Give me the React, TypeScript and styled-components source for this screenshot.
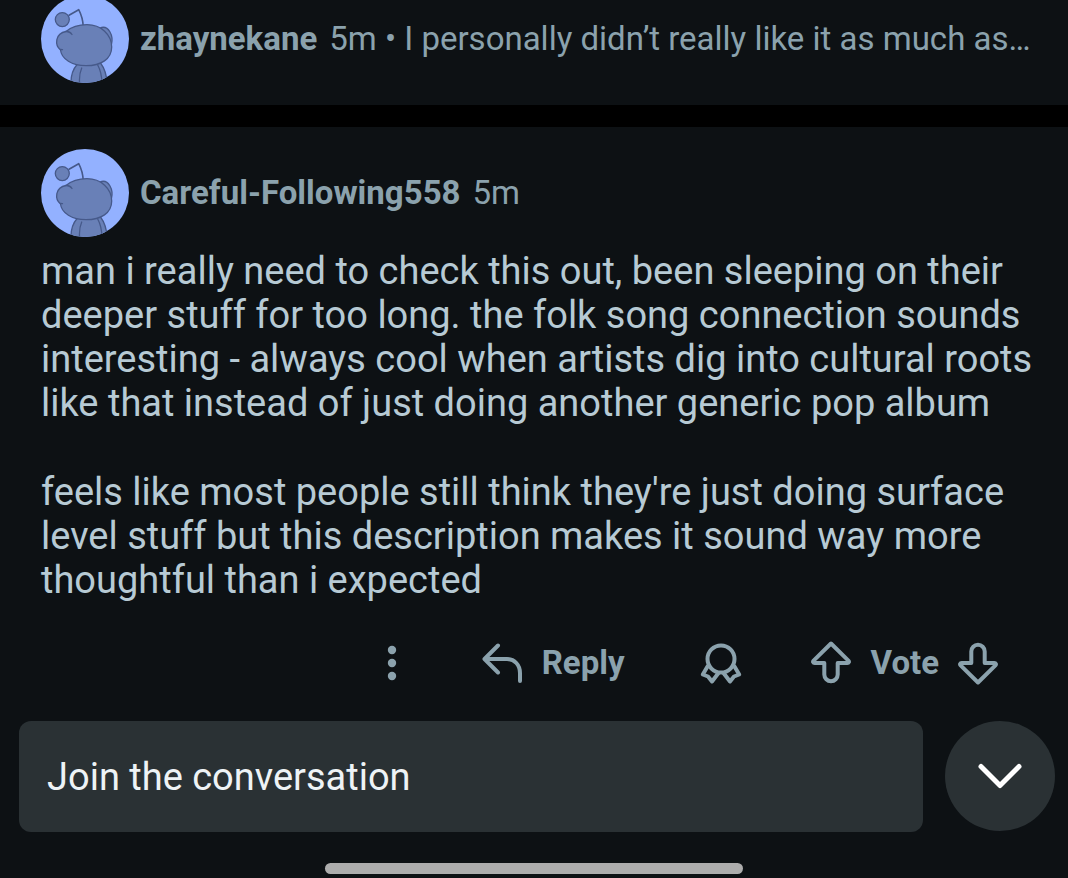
import React from 'react';
import styled, { createGlobalStyle } from 'styled-components';

const GlobalStyle = createGlobalStyle`
  * { box-sizing: border-box; }
  html { background: #0d1114; }
  body { margin: 0; font-family: Roboto, "Liberation Sans", sans-serif; }
  button, input { font: inherit; color: inherit; }
`;

const Screen = styled.div`
  display: flex;
  flex-direction: column;
  min-height: 100vh;
  overflow: hidden;
  background: #0d1114;
  color: #8ba2ad;
`;

const Thread = styled.main`
  flex: 1;
`;

const Comment = styled.article<{ $collapsed?: boolean }>`
  padding: ${(p) => (p.$collapsed ? '0 28px 22px 41px' : '22px 28px 0 41px')};
  margin-top: ${(p) => (p.$collapsed ? '-5px' : '0')};
`;

const Divider = styled.div`
  height: 22px;
  background: #000;
`;

const Header = styled.header`
  display: flex;
  align-items: center;
  gap: 11px;
  font-size: 33px;
  line-height: 40px;
`;

const AvatarSvg = styled.svg`
  flex: none;
  width: 88px;
  height: 88px;
  border-radius: 50%;
  background: #93b1ff;
`;

const Meta = styled.div`
  min-width: 0;
  overflow: hidden;
  white-space: nowrap;
  text-overflow: ellipsis;
`;

const Author = styled.a`
  margin-right: 12px;
  color: #8ba2ad;
  font-weight: 700;
  text-decoration: none;
`;

const Body = styled.div`
  padding-top: 12px;
  color: #b7cad4;
  font-size: 38px;
  line-height: 44px;
`;

const Paragraph = styled.p`
  margin: 0;
  & + & { margin-top: 45px; }
`;

const Actions = styled.div`
  display: flex;
  align-items: center;
  justify-content: flex-end;
  gap: 66px;
  padding: 39px 40px 36px 0;
`;

const ActionButton = styled.button`
  display: flex;
  align-items: center;
  gap: 18px;
  padding: 0;
  border: 0;
  background: none;
  font-size: 33px;
  font-weight: 700;
  line-height: 44px;
  cursor: pointer;
`;

const ReplyButton = styled(ActionButton)`
  padding-right: 8px;
`;

const VoteGroup = styled.div`
  display: flex;
  align-items: center;
  gap: 17px;
`;

const Icon = styled.svg<{ $weight?: number }>`
  flex: none;
  width: 44px;
  height: 44px;
  fill: none;
  stroke: currentColor;
  stroke-width: ${(p) => p.$weight ?? 4};
  stroke-linecap: round;
  stroke-linejoin: round;
`;

const Composer = styled.form`
  display: flex;
  align-items: flex-start;
  gap: 22px;
  padding: 0 13px 0 19px;
`;

const ComposerInput = styled.input`
  flex: 1;
  min-width: 0;
  height: 111px;
  padding: 0 28px;
  border: 0;
  border-radius: 12px;
  outline: 0;
  background: #2a3134;
  color: #eef3f6;
  font-size: 38px;
  &::placeholder { color: #eef3f6; opacity: 1; }
`;

const NextButton = styled.button`
  display: flex;
  flex: none;
  align-items: center;
  justify-content: center;
  width: 110px;
  height: 110px;
  padding: 0;
  border: 0;
  border-radius: 50%;
  background: #2a3134;
  color: #fff;
  cursor: pointer;
`;

const HomeBar = styled.div`
  align-self: center;
  width: 418px;
  max-width: 60%;
  height: 11px;
  margin: 31px 0 4px;
  border-radius: 6px;
  background: #adadad;
`;

const Avatar = () => (
  <AvatarSvg viewBox="0 0 88 88" aria-hidden="true">
    <g fill="#6980b7" stroke="#46598a" strokeWidth="1.3" strokeLinecap="round" strokeLinejoin="round">
      <path d="M28 20.3 37.7 14.7C40.5 20 42 25 42.3 32" fill="none" strokeWidth="1.6" />
      <circle cx="21.3" cy="24.6" r="7" />
      <path d="M36.500 69C32 74 29.500 81 30 90H66C66 82 64 74 59.500 68Z" />
      <path d="M40.700 73C38.500 78 38 83 38.700 90M56.700 70C60 76 61 82 61 90" fill="none" />
      <path d="M59 33C62.500 31.500 66.500 32.800 69 37C71 40.500 71.500 45 70.500 49L62 44Z" />
      <path d="M25 36.500C31 31.500 38 29.700 46 29.700C60 29.700 70.700 39.500 70.700 52C70.700 64 60 70.700 45 70.700C31 70.700 20.500 64 19.500 55C13.500 50 14 38.500 25 36.500Z" />
      <path d="M25 36.500C27.500 36.300 29.500 37.300 31 39.500M19.500 54.500 21.500 54.700" fill="none" />
    </g>
  </AvatarSvg>
);

const ARROW = 'M22 2.500 4.600 19.600C3.500 20.800 4.200 22 5.600 22H15.300V33.500A6.700 6.700 0 0 0 28.700 33.500V22H38.400C39.800 22 40.500 20.800 39.400 19.600Z';

export default function App() {
  return (
    <Screen>
      <GlobalStyle />
      <Thread>
        <Comment $collapsed>
          <Header>
            <Avatar />
            <Meta>
              <Author href="#zhaynekane">zhaynekane</Author>
              5m • I personally didn’t really like it as much as…
            </Meta>
          </Header>
        </Comment>
        <Divider />
        <Comment>
          <Header>
            <Avatar />
            <Meta>
              <Author href="#careful-following558">Careful-Following558</Author>
              5m
            </Meta>
          </Header>
          <Body>
            <Paragraph>
              man i really need to check this out, been sleeping on their deeper stuff for too long. the
              folk song connection sounds interesting - always cool when artists dig into cultural roots
              like that instead of just doing another generic pop album
            </Paragraph>
            <Paragraph>
              feels like most people still think they're just doing surface level stuff but this
              description makes it sound way more thoughtful than i expected
            </Paragraph>
          </Body>
          <Actions>
            <ActionButton type="button" aria-label="More options">
              <Icon viewBox="0 0 44 44">
                <g fill="currentColor" stroke="none">
                  <circle cx="22" cy="9" r="4.200" />
                  <circle cx="22" cy="22" r="4.200" />
                  <circle cx="22" cy="35" r="4.200" />
                </g>
              </Icon>
            </ActionButton>
            <ReplyButton type="button">
              <Icon viewBox="0 0 44 44">
                <path d="M18 4.500 4.500 18 18 31.500M5 18H27C34.500 18 40 24 40 32V40" />
              </Icon>
              Reply
            </ReplyButton>
            <ActionButton type="button" aria-label="Give award">
              <Icon viewBox="0 0 44 44">
                <circle cx="22" cy="18" r="13.500" />
                <path d="M8.500 25.500 3.800 33.500 9 35.500 13 40.500 19.500 32M35.500 25.500 40.200 33.500 35 35.500 31 40.500 24.500 32" />
              </Icon>
            </ActionButton>
            <VoteGroup>
              <ActionButton type="button">
                <Icon viewBox="0 0 44 44">
                  <path d={ARROW} />
                </Icon>
                Vote
              </ActionButton>
              <ActionButton type="button" aria-label="Downvote">
                <Icon viewBox="0 0 44 44">
                  <path d={ARROW} transform="rotate(180 22 22)" />
                </Icon>
              </ActionButton>
            </VoteGroup>
          </Actions>
        </Comment>
      </Thread>
      <Composer onSubmit={(e) => e.preventDefault()}>
        <ComposerInput aria-label="Join the conversation" placeholder="Join the conversation" />
        <NextButton type="button" aria-label="Next comment">
          <Icon viewBox="0 0 44 44" $weight={5}>
            <path d="M3 12.500 22 31.500 41 12.500" />
          </Icon>
        </NextButton>
      </Composer>
      <HomeBar />
    </Screen>
  );
}
